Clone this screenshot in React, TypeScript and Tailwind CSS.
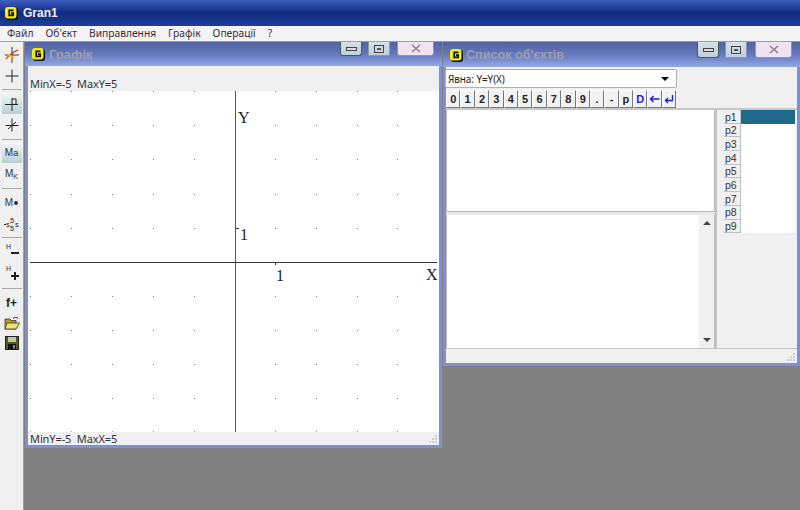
import React from "react";

const GLogo = () => (
  <svg width="13" height="13" viewBox="0 0 13 13" className="shrink-0">
    <rect x="1" y="1" width="12" height="12" rx="3" fill="#111" />
    <rect x="0" y="0" width="11.5" height="11.5" rx="3" fill="#f5ec10" />
    <path d="M8.5 3.4H4.2V8.4H8.2V6.2H6" fill="none" stroke="#111" strokeWidth="1.7" />
  </svg>
);

const xs = [30, 71, 112, 153, 194, 275, 316, 357, 397];
const ys = [91, 125, 159, 194, 228, 296, 330, 364, 398];

const Chart = () => (
  <svg viewBox="28 91 411 341" width="411" height="341" className="block">
    {ys.map((y) => xs.map((x) => <rect key={`${x}-${y}`} x={x} y={y} width="1" height="1" fill="#777" />))}
    {xs.map((x) => <rect key={x} x={x} y={431} width="1" height="1" fill="#999" />)}
    <rect x="235" y="91" width="1" height="341" fill="#555" />
    <rect x="30" y="262" width="407" height="1" fill="#333" />
    <rect x="275" y="263" width="1" height="2" fill="#333" />
    <rect x="236" y="228" width="3" height="1" fill="#333" />
    <g fontFamily="'Liberation Serif', serif" fontSize="16" fill="#222">
      <text x="238" y="123">Y</text>
      <text x="240" y="240">1</text>
      <text x="276" y="281">1</text>
      <text x="426" y="280">X</text>
    </g>
  </svg>
);

const Grip = () => (
  <svg width="10" height="10" viewBox="0 0 10 10" className="absolute right-[1px] bottom-[1px]">
    {[[7, 1], [4, 4], [7, 4], [1, 7], [4, 7], [7, 7]].map(([x, y]) => (
      <rect key={`${x}${y}`} x={x} y={y} width="2" height="2" fill="#d0d0d0" />
    ))}
  </svg>
);

const WinBtns = ({ h, gapA, gapB }: { h: string; gapA: string; gapB: string }) => (
  <div className={`flex items-start ${h}`}>
    <div className={`w-[22px] h-full bg-gradient-to-b from-[#d5e2e8] to-[#bcd0dc] border border-t-0 border-[#4a5560] rounded-b-[3px] flex items-center justify-center ${gapA}`}>
      <div className="w-[11px] h-[4px] border border-[#444] bg-[#d8d8d8]" />
    </div>
    <div className={`w-[22px] h-full bg-gradient-to-b from-[#d5e2e8] to-[#bcd0dc] border border-t-0 border-[#8b9aa8] flex items-center justify-center ${gapB}`}>
      <div className="w-[10px] h-[8px] border border-[#444] flex items-center justify-center">
        <div className="w-[4px] h-[2px] bg-[#555]" />
      </div>
    </div>
    <div className="w-[37px] h-full bg-[#f0e2f0] border border-t-0 border-[#9a8fb0] rounded-b-[3px] flex items-center justify-center">
      <svg width="10" height="9" viewBox="0 0 10 9"><path d="M1 1L9 8M9 1L1 8" stroke="#8a8290" strokeWidth="1.6" /></svg>
    </div>
  </div>
);

const Sep = ({ h }: { h: string }) => (
  <div className={`${h} flex items-center justify-center shrink-0`}>
    <div className="w-[20px] h-[1px] bg-[#a8a8a8]" />
  </div>
);

const Tb = ({ active, h = "h-[21px]", children }: { active?: boolean; h?: string; children: React.ReactNode }) => (
  <div className={`${h} w-[20px] mx-auto shrink-0 flex items-center justify-center ${active ? "bg-gradient-to-b from-[#f2f6f6] to-[#b6d0d8] rounded-[1px]" : ""}`}>
    {children}
  </div>
);

const I = ({ children }: { children: React.ReactNode }) => (
  <svg width="18" height="18" viewBox="0 0 18 18" fill="none">{children}</svg>
);

const Toolbar = () => (
  <div className="w-[24px] shrink-0 bg-[#f0f0f0] border-r border-[#a0a0a0] pt-[2px] flex flex-col text-[#222]">
    <Tb>
      <I>
        <path d="M9 1V17M2 9H16" stroke="#333" />
        <path d="M3 13C6 9 10 6 15 4" stroke="#e02020" strokeWidth="1.2" />
        <path d="M4 8L12 12" stroke="#e8d020" strokeWidth="1.4" />
      </I>
    </Tb>
    <Tb><I><path d="M9 2.5V15.5M2.5 9H15.5" stroke="#222" /></I></Tb>
    <Sep h="h-[7px]" />
    <Tb active>
      <I><path d="M9 3V16M2 9.5H15M9 4H13V9" stroke="#222" /></I>
    </Tb>
    <Tb><I><path d="M9 2.5V15.5M2.5 9.5H15.5M5 13L13 6" stroke="#222" /></I></Tb>
    <Sep h="h-[8px]" />
    <Tb active h="h-[20px]">
      <span className="text-[10px] leading-none font-['Liberation_Sans',sans-serif] text-[#333]">M<span className="text-[9px]">a</span></span>
    </Tb>
    <Tb>
      <span className="text-[10px] leading-none font-['Liberation_Sans',sans-serif] text-[#333]">M<span className="text-[7px] relative top-[2px]">K</span></span>
    </Tb>
    <Sep h="h-[8px]" />
    <Tb>
      <span className="text-[10px] leading-none font-['Liberation_Sans',sans-serif] text-[#333] flex items-center">M<span className="w-[4px] h-[4px] rounded-full bg-[#333] ml-[1px]" /></span>
    </Tb>
    <Tb>
      <svg width="16" height="16" viewBox="0 0 16 16" fontFamily="'Liberation Sans', sans-serif" fontSize="7.5" fill="#222">
        <rect x="0" y="8" width="2" height="1" />
        <text x="2" y="11">s</text><text x="6" y="7">5</text><text x="6" y="14.5">5</text><text x="11" y="11">s</text>
      </svg>
    </Tb>
    <Sep h="h-[6px]" />
    <Tb>
      <I>
        <text x="3" y="7" fontSize="7" fill="#333" fontFamily="'Liberation Sans', sans-serif">H</text>
        <path d="M8 11H16" stroke="#222" strokeWidth="2" />
      </I>
    </Tb>
    <Tb h="h-[23px]">
      <I>
        <text x="3" y="7" fontSize="7" fill="#333" fontFamily="'Liberation Sans', sans-serif">H</text>
        <path d="M8 12H16M12 8V16" stroke="#222" strokeWidth="2" />
      </I>
    </Tb>
    <Sep h="h-[8px]" />
    <Tb>
      <span className="text-[12px] leading-none font-bold font-['Liberation_Sans',sans-serif] text-[#222]">f+</span>
    </Tb>
    <Tb h="h-[19px]">
      <svg width="16" height="14" viewBox="0 0 16 14">
        <path d="M1 3H6L7 4.5H12V13H1Z" fill="#b89a20" stroke="#333" strokeWidth="0.8" />
        <path d="M3 7H15.5L12 13H1Z" fill="#f4e070" stroke="#333" strokeWidth="0.8" />
        <path d="M9 2.5C10.5 1 12.5 1 14 2.5" stroke="#222" fill="none" />
      </svg>
    </Tb>
    <Tb>
      <svg width="14" height="14" viewBox="0 0 14 14">
        <rect x="0.5" y="0.5" width="13" height="13" fill="#5a5a20" stroke="#222" />
        <rect x="3" y="1" width="8" height="5" fill="#c8c8a0" />
        <rect x="3" y="8" width="8" height="5.5" fill="#111" />
        <rect x="8" y="9" width="2" height="3.5" fill="#888" />
      </svg>
    </Tb>
  </div>
);

const keys: { t: string; blue?: boolean; icon?: React.ReactNode }[] = [
  { t: "0" }, { t: "1" }, { t: "2" }, { t: "3" }, { t: "4" }, { t: "5" }, { t: "6" }, { t: "7" }, { t: "8" }, { t: "9" },
  { t: "." }, { t: "-" }, { t: "p" }, { t: "D", blue: true },
  {
    t: "left",
    icon: (
      <svg width="11" height="8" viewBox="0 0 11 8" fill="none"><path d="M10.5 4H1.5M4.5 1L1.5 4L4.5 7" stroke="#1a1ae0" strokeWidth="1.4" /></svg>
    ),
  },
  {
    t: "enter",
    icon: (
      <svg width="10" height="9" viewBox="0 0 10 9" fill="none"><path d="M8.5 0V5.5H1.5M4 3L1.5 5.5L4 8" stroke="#1a1ae0" strokeWidth="1.3" /></svg>
    ),
  },
];

const GraphWindow = () => (
  <div className="absolute left-[1px] top-0 w-[417px] h-[406px] bg-[#7c90d8] flex flex-col px-[3px] pb-[3px]">
    <div className="h-[24px] -mx-[3px] px-[7px] shrink-0 bg-gradient-to-b from-[#50629f] via-[#6479bd] to-[#92a8e6] flex items-start justify-between relative">
      <div className="flex items-center gap-[4px] pt-[5px]">
        <GLogo />
        <span className="text-[13px] leading-[15px] font-bold text-[#9c9eb0] font-['Liberation_Sans',sans-serif]">Графік</span>
      </div>
      <div className="absolute left-[315px] top-0">
        <WinBtns h="h-[14px]" gapA="mr-[6px]" gapB="mr-[7px]" />
      </div>
    </div>
    <div className="flex-1 flex flex-col bg-[#f0f0f0] min-h-0 text-[11px] text-[#333] font-['Noto_Sans',sans-serif] relative">
      <div className="h-[25px] shrink-0 flex items-end pl-[2px] leading-[14px] whitespace-pre tracking-[-0.1px]">MinX=-5  MaxY=5</div>
      <div className="shrink-0 bg-white"><Chart /></div>
      <div className="flex-1 flex items-center pl-[2px] leading-[13px] whitespace-pre tracking-[-0.1px]">MinY=-5  MaxX=5</div>
      <Grip />
    </div>
  </div>
);

const ListWindow = () => (
  <div className="absolute left-[419px] top-0 w-[357px] h-[324px] bg-[#7c90d8] flex flex-col px-[3px] pb-[3px]">
    <div className="h-[25px] -mx-[3px] px-[7px] shrink-0 bg-gradient-to-b from-[#50629f] via-[#6479bd] to-[#92a8e6] flex items-start relative">
      <div className="flex items-center gap-[3px] pt-[6px]">
        <GLogo />
        <span className="text-[12.6px] leading-[15px] font-bold text-[#9c9eb0] font-['Liberation_Sans',sans-serif]">Список об'єктів</span>
      </div>
      <div className="absolute left-[254px] top-0">
        <WinBtns h="h-[16px]" gapA="mr-[6px]" gapB="mr-[8px]" />
      </div>
    </div>
    <div className="flex-1 flex flex-col bg-[#f0f0f0] min-h-0 font-['Noto_Sans',sans-serif] text-[#222] relative">
      <div className="h-[23px] shrink-0 pt-[2px]">
        <div className="w-[232px] h-[19px] ml-[-1px] bg-white border border-[#b0b0b0] rounded-[2px] flex items-center justify-between pl-[2px] pr-[7px] text-[10px] leading-none tracking-[-0.1px]">
          <span>Явна: Y=Y(X)</span>
          <span className="w-0 h-0 border-x-[4px] border-x-transparent border-t-[4px] border-t-black" />
        </div>
      </div>
      <div className="h-[18px] shrink-0 flex">
        {keys.map((k) => (
          <div
            key={k.t}
            className={`w-[14.4px] h-[18px] shrink-0 bg-[#f2f2f2] border-r border-b border-[#777] border-l-[#fff] border-l border-t border-t-white flex items-center justify-center text-[11px] font-bold leading-none ${k.blue ? "text-[#1a1ae0]" : "text-[#222]"} font-['Liberation_Sans',sans-serif]`}
          >
            {k.icon ?? k.t}
          </div>
        ))}
      </div>
      <div className="flex-1 flex min-h-0 border-t-2 border-[#c8c8c8]">
        <div className="w-[269px] shrink-0 flex flex-col">
          <div className="h-[102px] shrink-0 bg-white border border-[#b8b8b8] border-t-0" />
          <div className="h-[3px] shrink-0 bg-[#e8e8e8]" />
          <div className="flex-1 flex bg-white border border-[#b8b8b8] border-t-0 border-b-0">
            <div className="flex-1" />
            <div className="w-[15px] bg-[#f0f0f0] flex flex-col items-center justify-between py-[6px]">
              <span className="w-0 h-0 border-x-[4px] border-x-transparent border-b-[4px] border-b-[#444]" />
              <span className="w-0 h-0 border-x-[4px] border-x-transparent border-t-[4px] border-t-[#444]" />
            </div>
          </div>
        </div>
        <div className="flex-1 border-l-2 border-[#c4c4c4] pl-[7px] pr-[2px] text-[10.5px]">
          <div className="flex flex-col">
            {[1, 2, 3, 4, 5, 6, 7, 8, 9].map((n) => (
              <div key={n} className="h-[13.7px] flex">
                <div className="w-[17px] bg-[#f0f0f0] border-r border-b border-[#c0c0c0] flex items-center pl-[1px] pt-[1px] leading-none text-[#333] font-['Liberation_Sans',sans-serif]">p{n}</div>
                <div className={`flex-1 ${n === 1 ? "bg-[#1f6a8c]" : "bg-white"}`} />
              </div>
            ))}
          </div>
        </div>
      </div>
      <div className="h-[15px] shrink-0 border-t border-[#c4c4c4]" />
      <Grip />
    </div>
  </div>
);

export default function App() {
  return (
    <div className="w-[800px] h-[510px] flex flex-col overflow-hidden bg-[#808080] font-['Noto_Sans',sans-serif]">
      <div className="h-[26px] shrink-0 bg-gradient-to-b from-[#3f5fc0] via-[#102a80] to-[#1e3f98] flex items-center pl-[5px] gap-[5px]">
        <GLogo />
        <span className="text-[12px] font-bold text-[#f0f0f0] leading-none font-['Liberation_Sans',sans-serif]">Gran1</span>
      </div>
      <div className="h-[16px] shrink-0 bg-[#f4f4f4] border-b border-[#a0a0a0] flex items-center pl-[7px] gap-[12px] text-[10.25px] text-[#3a2a40] leading-none">
        <span>Файл</span>
        <span>Об'єкт</span>
        <span>Виправлення</span>
        <span>Графік</span>
        <span>Операції</span>
        <span>?</span>
      </div>
      <div className="flex-1 flex min-h-0">
        <Toolbar />
        <div className="flex-1 relative overflow-hidden bg-[#808080]">
          <GraphWindow />
          <ListWindow />
        </div>
      </div>
    </div>
  );
}
